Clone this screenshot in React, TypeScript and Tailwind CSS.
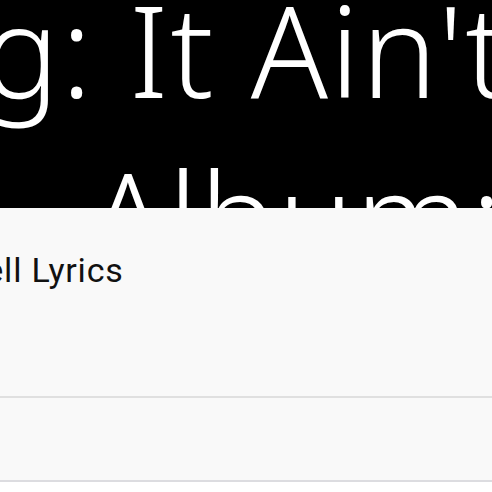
export default function App() {
  return (
    <div className="h-[492px] w-[492px] overflow-hidden bg-white">
      <div className="h-[208px] overflow-hidden bg-black font-['Noto_Sans',sans-serif] text-[127px] font-light leading-[165px] tracking-[2px] text-white">
        <div className="-mt-[34px] -ml-[243px] whitespace-nowrap">Song: It Ain't Over</div>
        <div className="mt-[2px] ml-[89px] whitespace-nowrap">Album: Mama Said</div>
      </div>
      <div className="h-[188px] overflow-hidden bg-[#f9f9f9] font-['Roboto',sans-serif] text-[34px] leading-[40px] tracking-[0.8px] text-[#111]">
        <div className="-ml-[208px] pt-[42px] whitespace-nowrap">Glen Campbell Lyrics</div>
      </div>
      <div className="h-[2px] bg-[#e0e0e0]" />
      <div className="h-[82px] bg-[#f9f9f9]" />
      <div className="h-[2px] bg-[#dcdce0]" />
    </div>
  );
}
